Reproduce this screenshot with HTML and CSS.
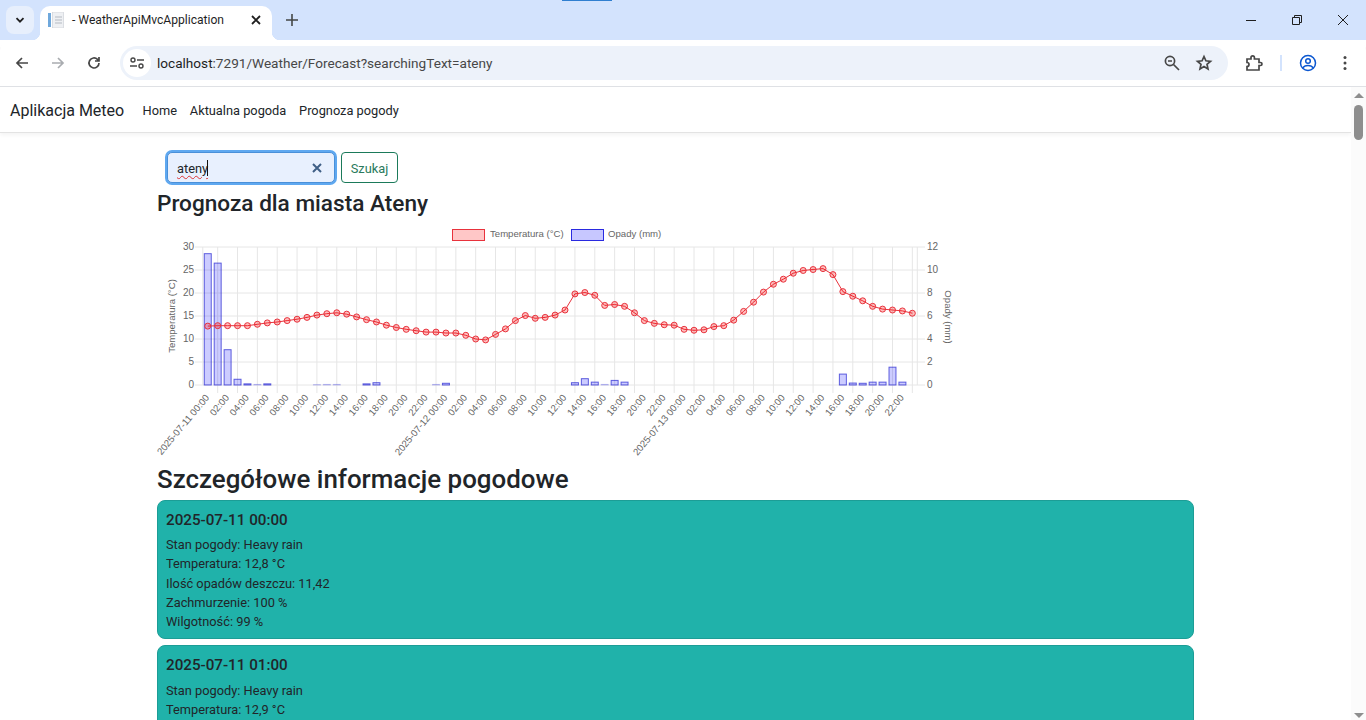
FILE: index.html
```html
<!DOCTYPE html>
<html lang="pl">
<head>
    <meta charset="UTF-8">
    <title>WeatherApiMvcApplication</title>
    <link rel="stylesheet" href="styles.css">
    <script>
        window.onload = function(){
            var svgNS = 'http://www.w3.org/2000/svg';
            var chart = document.getElementById('chart');

            var temps = [12.8,12.9,12.9,12.9,12.9,13.2,13.5,13.7,14.0,14.3,14.7,15.2,15.5,15.7,15.4,14.8,14.2,13.7,13.0,12.5,12.1,11.8,11.5,
                11.5,11.3,11.3,10.8,10.0,9.8,11.0,12.2,14.0,15.1,14.5,14.7,15.2,16.3,19.8,20.1,19.5,17.3,17.5,17.1,15.7,14.0,13.4,13.1,13.0,12.1,
                11.9,12.0,12.7,12.9,14.1,16.0,18.0,20.2,21.9,23.0,24.3,24.9,25.1,25.3,24.0,20.3,19.3,18.3,17.1,16.5,16.3,16.1,15.6];
            var rain = {0:11.42,1:10.6,2:3.07,3:0.5,4:0.1,5:0.05,6:0.1,11:0.03,12:0.05,13:0.05,16:0.1,17:0.2,23:0.05,24:0.15,
                37:0.2,38:0.55,39:0.25,40:0.05,41:0.4,42:0.25,64:0.95,65:0.17,66:0.15,67:0.25,68:0.25,69:1.55,70:0.25};

            var left = 202.8, right = 917.3, top = 247, bottom = 385;
            var step = (right - left) / 72;

            function add(tag, attrs, text){
                var el = document.createElementNS(svgNS, tag);
                for(var k in attrs){
                    el.setAttribute(k, attrs[k]);
                }
                if(text){
                    el.textContent = text;
                }
                chart.appendChild(el);
                return el;
            }
            function xAt(i){ return left + step * (i + 0.5); }
            function yTemp(t){ return bottom - t * (bottom - top) / 30; }
            function yRain(r){ return bottom - r * (bottom - top) / 12; }

            // grid
            for(var g = 0; g <= 6; g++){
                var gy = top + g * (bottom - top) / 6;
                add('line', {x1:195, x2:925, y1:gy, y2:gy, 'class':'grid'});
                add('text', {x:194, y:gy + 3, 'class':'tick num end'}, String(30 - g * 5));
                add('text', {x:927, y:gy + 3, 'class':'tick num'}, String(12 - g * 2));
            }
            add('line', {x1:left, x2:left, y1:top, y2:bottom, 'class':'grid'});
            add('line', {x1:right, x2:right, y1:top, y2:bottom, 'class':'grid'});
            for(var v = 1; v < 72; v += 2){
                add('line', {x1:xAt(v), x2:xAt(v), y1:top, y2:bottom + 8, 'class':'grid'});
            }

            // opady
            for(var r in rain){
                var h = rain[r] * (bottom - top) / 12;
                add('rect', {x:xAt(+r) - 3.5, y:yRain(rain[r]), width:7, height:h, 'class':rain[r] < 0.06 ? 'bar faint' : 'bar'});
            }

            // temperatura
            var pts = [];
            for(var i = 0; i < temps.length; i++){
                pts.push(xAt(i).toFixed(1) + ',' + yTemp(temps[i]).toFixed(1));
            }
            add('polyline', {points:pts.join(' '), 'class':'line'});
            for(var j = 0; j < temps.length; j++){
                add('circle', {cx:xAt(j), cy:yTemp(temps[j]), r:3, 'class':'dot'});
            }

            // etykiety osi x
            var days = ['2025-07-11', '2025-07-12', '2025-07-13'];
            for(var n = 0; n < 72; n += 2){
                var hour = n % 24;
                var label = (hour < 10 ? '0' : '') + hour + ':00';
                if(hour == 0){
                    label = days[n / 24] + ' ' + label;
                }
                var lx = xAt(n) + 2, ly = bottom + 13;
                add('text', {x:lx, y:ly, 'class':'tick end', transform:'rotate(-50 ' + lx + ' ' + ly + ')'}, label);
            }

            add('text', {x:175, y:316, 'class':'tick mid', transform:'rotate(-90 175 316)'}, 'Temperatura (°C)');
            add('text', {x:945, y:317, 'class':'tick mid', transform:'rotate(90 945 317)'}, 'Opady (mm)');

            // legenda
            add('rect', {x:452.5, y:229.5, width:32, height:11, 'class':'legend-red'});
            add('text', {x:490, y:237, 'class':'tick'}, 'Temperatura (°C)');
            add('rect', {x:571.5, y:229.5, width:32, height:11, 'class':'legend-blue'});
            add('text', {x:608, y:237, 'class':'tick'}, 'Opady (mm)');
        }
    </script>
</head>

<body>
<div class="capture-bar"></div>

<div class="tabstrip">
    <div class="tab-search">
        <svg width="12" height="12" viewBox="0 0 12 12"><path d="M2.5 4.2 6 7.7l3.5-3.5" class="ico-bold"/></svg>
    </div>
    <div class="tab">
        <svg class="favicon" width="16" height="16" viewBox="0 0 16 16">
            <rect x="0" y="1" width="3" height="14" fill="#6fa8dc"/>
            <rect x="4.500" y="0" width="11" height="16" fill="#eef0f3" stroke="#c8ccd2" stroke-width=".6"/>
            <path d="M7 5h7M7 8h7M7 11h7" stroke="#b5bac2" stroke-width="1"/>
        </svg>
        <span class="tab-title">- WeatherApiMvcApplication</span>
        <svg class="tab-close" width="12" height="12" viewBox="0 0 12 12"><path d="M2 2l8 8M10 2l-8 8" class="ico-bold"/></svg>
    </div>
    <svg class="new-tab" width="14" height="14" viewBox="0 0 14 14"><path d="M7 1v12M1 7h12" class="ico-plus"/></svg>
    <div class="win-controls">
        <svg width="12" height="12" viewBox="0 0 12 12"><path d="M1 6.500h10" class="ico-thin"/></svg>
        <svg width="12" height="12" viewBox="0 0 12 12"><path d="M1.500 3.500h7v7h-7zM3.500 3.500v-2h7v7h-2" class="ico-thin"/></svg>
        <svg width="12" height="12" viewBox="0 0 12 12"><path d="M1 1l10 10M11 1 1 11" class="ico-thin"/></svg>
    </div>
</div>

<div class="toolbar">
    <div class="nav-btns">
        <svg width="16" height="16" viewBox="0 0 16 16"><path d="M14 8H3M8 3 3 8l5 5" class="ico-tool"/></svg>
        <svg width="16" height="16" viewBox="0 0 16 16"><path d="M2 8h11M8 3l5 5-5 5" class="ico-tool ico-off"/></svg>
        <svg width="16" height="16" viewBox="0 0 16 16"><path d="M13 8a5 5 0 1 1-1.500-3.600L13 6M13 2v4H9" class="ico-tool"/></svg>
    </div>
    <div class="omnibox">
        <div class="site-btn">
            <svg width="16" height="16" viewBox="0 0 16 16">
                <path d="M8 5h7M1 11h7" class="ico-tune"/>
                <circle cx="4" cy="5" r="2" class="ico-tune"/>
                <circle cx="12" cy="11" r="2" class="ico-tune"/>
            </svg>
        </div>
        <div class="url"><span class="url-host">localhost</span>:7291/Weather/Forecast?searchingText=ateny</div>
        <svg class="omni-zoom" width="18" height="18" viewBox="0 0 18 18">
            <circle cx="7" cy="7" r="4.600" class="ico-tool"/><path d="M5 7h4M10.500 10.500 16 16" class="ico-tool"/>
        </svg>
        <svg class="omni-star" width="18" height="18" viewBox="0 0 18 18">
            <path d="M9 2.500l1.900 4.300 4.600.5-3.500 3 1 4.600L9 12.500l-4 2.400 1-4.600-3.500-3 4.600-.5z" class="ico-tool"/>
        </svg>
    </div>
    <div class="tool-right">
        <svg width="18" height="18" viewBox="0 0 18 18">
            <path d="M2 5h4V3.500a1.700 1.700 0 0 1 3.400 0V5H14v3.500h1.500a1.500 1.500 0 0 1 0 3H14V16H2v-3.500a2 2 0 0 0 0-4z" class="ico-tool"/>
        </svg>
        <span class="tool-sep"></span>
        <svg width="18" height="18" viewBox="0 0 18 18">
            <circle cx="9" cy="9" r="7.500" class="ico-profile"/><circle cx="9" cy="7" r="2.300" class="ico-profile"/>
            <path d="M3.800 14c1-2 3-2.600 5.200-2.600s4.200.6 5.200 2.600" class="ico-profile"/>
        </svg>
        <svg class="dots" width="4" height="16" viewBox="0 0 4 16"><circle cx="2" cy="2.500" r="1.500"/><circle cx="2" cy="8" r="1.500"/><circle cx="2" cy="13.500" r="1.500"/></svg>
    </div>
</div>

<div class="viewport">
    <div class="page">
        <nav class="navbar">
            <a class="brand">Aplikacja Meteo</a>
            <a class="nav-link">Home</a>
            <a class="nav-link">Aktualna pogoda</a>
            <a class="nav-link">Prognoza pogody</a>
        </nav>
        <main class="container">
            <form class="search">
                <div class="search-box">
                    <span class="typed">ateny</span><span class="caret"></span>
                    <svg class="clear" width="10" height="10" viewBox="0 0 10 10"><path d="M1 1l8 8M9 1 1 9"/></svg>
                </div>
                <div class="btn">Szukaj</div>
            </form>
            <h3>Prognoza dla miasta Ateny</h3>
            <svg id="chart" class="chart" width="800" height="240" viewBox="157 226 800 240"></svg>
            <h2>Szczegółowe informacje pogodowe</h2>
            <div class="card">
                <h5>2025-07-11 00:00</h5>
                <p>Stan pogody: Heavy rain</p>
                <p>Temperatura: 12,8 °C</p>
                <p>Ilość opadów deszczu: 11,42</p>
                <p>Zachmurzenie: 100 %</p>
                <p>Wilgotność: 99 %</p>
            </div>
            <div class="card">
                <h5>2025-07-11 01:00</h5>
                <p>Stan pogody: Heavy rain</p>
                <p>Temperatura: 12,9 °C</p>
            </div>
        </main>
    </div>
    <div class="scrollbar">
        <span class="arrow-up"></span>
        <span class="thumb"></span>
        <span class="arrow-down"></span>
    </div>
</div>
</body>
</html>
```

FILE: styles.css
```css
*{ margin:0; padding:0; box-sizing:border-box;}
html,body{ height:720px; overflow:hidden;}
body{ background:#fff; font-family:Roboto,"Noto Sans",sans-serif; color:#212529; display:flex; flex-direction:column;}
svg{ display:block; flex:none;}

/* browser window */
.capture-bar{ position:absolute; left:562px; top:0; width:50px; height:1px; background:#2f7fd0;}
.tabstrip{ height:40px; background:#d3e3fd; display:flex; align-items:flex-start; flex:none;}
.tab-search{ width:28px; height:28px; margin:6px 6px 0 6px; background:#e7effc; border-radius:8px; display:flex; align-items:center; justify-content:center;}
.tab{ position:relative; width:232px; height:34px; margin-top:6px; background:#fff; border-radius:10px 10px 0 0; display:flex; align-items:center; padding:0 10px 6px 8px;}
.tab::before,.tab::after{ content:""; position:absolute; bottom:0; width:8px; height:8px;}
.tab::before{ left:-8px; background:radial-gradient(circle at 0 0, transparent 8px, #fff 8.5px);}
.tab::after{ right:-8px; background:radial-gradient(circle at 100% 0, transparent 8px, #fff 8.5px);}
.favicon{ margin-right:8px;}
.tab-title{ font-size:12.1px; color:#1f1f1f; flex:1; white-space:nowrap;}
.new-tab{ margin:13px 0 0 13px;}
.win-controls{ margin-left:auto; display:flex; gap:34px; padding:14px 17px 0 0;}
.toolbar{ height:46px; margin-bottom:1px; background:#fff; display:flex; align-items:center; flex:none; border-radius:10px 10px 0 0; box-shadow:0 1px 0 #dfe1e5;}
.nav-btns{ width:120px; display:flex; padding-left:14px; gap:20px;}
.omnibox{ width:1108px; height:34px; background:#edf2fa; border-radius:17px; display:flex; align-items:center; padding:0 15px 0 3px;}
.site-btn{ width:28px; height:28px; border-radius:50%; background:#fff; display:flex; align-items:center; justify-content:center;}
.url{ flex:1; margin-left:6px; font-size:13.6px; color:#474747; white-space:nowrap;}
.url-host{ color:#1f1f1f;}
.omni-zoom{ margin-right:14px;}
.tool-right{ flex:1; display:flex; align-items:center; padding-left:17px;}
.tool-sep{ width:2px; height:16px; background:#d3e3fd; margin:0 17px;}
.dots{ margin-left:26px;}

.ico-bold{ fill:none; stroke:#1f1f1f; stroke-width:1.8;}
.ico-plus{ fill:none; stroke:#444746; stroke-width:1.6;}
.ico-thin{ fill:none; stroke:#1f1f1f; stroke-width:1;}
.ico-tool{ fill:none; stroke:#474747; stroke-width:1.7;}
.ico-off{ stroke:#a9acb0;}
.ico-tune{ fill:none; stroke:#474747; stroke-width:1.4;}
.ico-profile{ fill:none; stroke:#0b57d0; stroke-width:1.5;}
.dots circle{ fill:#474747;}

/* page */
.viewport{ flex:1; display:flex; min-height:0;}
.page{ flex:1; overflow:hidden; min-width:0;}
.navbar{ height:46px; display:flex; align-items:center; padding:1px 0 0 10px; border-bottom:1px solid #e3e3e3; box-shadow:0 2px 4px rgba(0,0,0,.05);}
.brand{ font-size:16px; margin-right:12px; color:#212529;}
.nav-link{ font-size:12.8px; padding:0 6.400px; color:#212529;}
.container{ width:1037px; margin:0 0 0 157px; padding-top:19px;}
.search{ display:flex; gap:6px; margin-left:10px; align-items:flex-start;}
.search-box{ width:168px; height:31px; background:#e8f0fe; border:1px solid #4a90d9; border-radius:5px; box-shadow:0 0 0 2px #5fa8f0; display:flex; align-items:center; padding:1px 0 0 9px; position:relative;}
.typed{ font-size:12.8px; color:#212529; text-decoration:underline wavy #d33 1px; text-underline-offset:2px;}
.caret{ width:1px; height:16px; background:#111; margin-left:-1px;}
.clear{ position:absolute; right:12px; top:10px; fill:none; stroke:#3f5f86; stroke-width:2;}
.btn{ height:31px; width:57px; padding-top:1px; border:1px solid #1b7a5a; border-radius:4px; color:#2a7a5c; font-size:12.8px; display:flex; align-items:center; justify-content:center;}
h3{ font-size:22.6px; font-weight:500; line-height:26.900px; margin-top:8px; white-space:nowrap;}
.chart{ margin-top:8px; overflow:visible;}
h2{ font-size:25.9px; font-weight:500; line-height:30.700px; margin-top:-2px; margin-bottom:5px; white-space:nowrap;}
.card{ background:#20b2aa; border:1px solid #1c9d96; border-radius:8px; padding:10px 8px 8px; margin-bottom:6px; height:139.600px;}
h5{ font-size:15.2px; font-weight:500; line-height:19.200px; margin-bottom:5.400px;}
.card p{ font-size:12.8px; line-height:19.200px;}

/* chart */
.grid{ stroke:#e6e6e6; stroke-width:1;}
.tick{ font-family:"Liberation Sans",Arial,sans-serif; font-size:9.600px; fill:#666;}
.num{ font-size:10px;}
.end{ text-anchor:end;}
.mid{ text-anchor:middle;}
.bar{ fill:rgba(0,0,255,.2); stroke:rgba(0,0,200,.6); stroke-width:1;}
.faint{ stroke:rgba(0,0,200,.2);}
.line{ fill:none; stroke:#e8323c; stroke-width:1;}
.dot{ fill:rgba(255,0,0,.25); stroke:#e8323c; stroke-width:1;}
.legend-red{ fill:rgba(255,0,0,.22); stroke:#e8323c; stroke-width:1;}
.legend-blue{ fill:rgba(0,0,255,.22); stroke:#2a2ae0; stroke-width:1;}

/* scrollbar */
.scrollbar{ width:15px; background:#fbfbfb; display:flex; flex-direction:column; align-items:center; padding-top:6px; position:relative;}
.arrow-up{ width:0; height:0; border-left:5px solid transparent; border-right:5px solid transparent; border-bottom:5px solid #8e8e8e;}
.thumb{ width:9px; height:35px; background:#8e8e8e; border-radius:5px; margin-top:7px;}
.arrow-down{ width:0; height:0; border-left:5px solid transparent; border-right:5px solid transparent; border-top:5px solid #8e8e8e; margin-top:auto; margin-bottom:2px;}
```
